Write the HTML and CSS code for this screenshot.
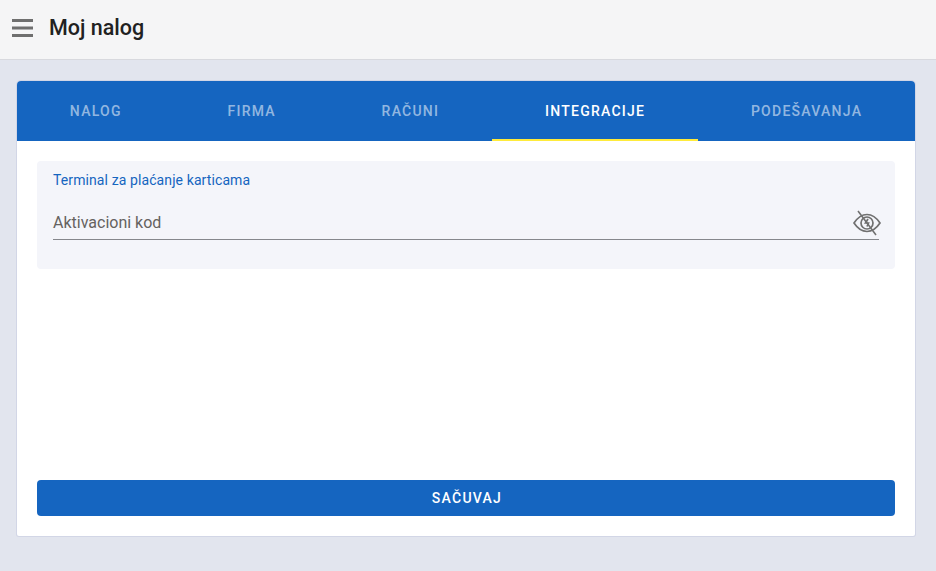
FILE: index.html
```html
<!DOCTYPE html>
<html lang="sr">
<head>
<meta charset="utf-8">
<title>Moj nalog</title>
<link rel="stylesheet" href="styles.css">
</head>
<body>
<header class="topbar">
  <svg class="menu-icon" width="21" height="18" viewBox="0 0 21 18"><path d="M0 0h21v3H0zM0 7.500h21v3H0zM0 15h21v3H0z" fill="#6f6f6f"/></svg>
  <h1 class="title">Moj nalog</h1>
</header>
<main class="page">
  <section class="card">
    <nav class="tabs">
      <a class="tab">NALOG</a>
      <a class="tab">FIRMA</a>
      <a class="tab">RAČUNI</a>
      <a class="tab active">INTEGRACIJE</a>
      <a class="tab">PODEŠAVANJA</a>
    </nav>
    <div class="content">
      <div class="panel">
        <div class="panel-label">Terminal za plaćanje karticama</div>
        <div class="field">
          <span class="placeholder">Aktivacioni kod</span>
          <svg class="eye" width="28" height="26" viewBox="0 0 28 26" fill="none" stroke="#707070">
            <path d="M1 13C5 7 9 4.500 14 4.500S23 7 27 13C23 19 19 21.500 14 21.500S5 19 1 13Z" stroke-width="1.700"/>
            <circle cx="14" cy="13" r="6" stroke-width="1.700"/>
            <path d="M15 9l-2.500 4h3l-1.500 3.500" stroke-width="1.700"/>
            <path d="M5 1l18 24" stroke-width="1.500"/>
          </svg>
        </div>
      </div>
      <button class="save" type="button">SAČUVAJ</button>
    </div>
  </section>
</main>
</body>
</html>
```
FILE: styles.css
```css
* { box-sizing: border-box; }
html, body { margin: 0; height: 100%; }
body {
  background: #e2e5ee;
  font-family: Roboto, "Liberation Sans", sans-serif;
  display: flex;
  flex-direction: column;
  overflow: hidden;
}
.topbar {
  height: 60px;
  flex: none;
  background: #f5f5f6;
  border-bottom: 1px solid #d8d9de;
  display: flex;
  align-items: center;
  padding: 0 0 4px 12px;
  gap: 16px;
}
.menu-icon { flex: none; }
.title {
  margin: 0;
  font-size: 21.5px;
  line-height: 24px;
  font-weight: 500;
  color: #212121;
}
.page { padding: 21px 21px 35px 17px; flex: 1; display: flex; min-height: 0; }
.card {
  flex: 1;
  background: #fff;
  border-radius: 4px 4px 2px 2px;
  box-shadow: 0 0 0 1px rgba(200, 203, 225, .6);
  display: flex;
  flex-direction: column;
}
.tabs {
  height: 60px;
  flex: none;
  background: #1565c0;
  border-radius: 4px 4px 0 0;
  display: flex;
}
.tab {
  flex: 1 1 auto;
  display: flex;
  align-items: center;
  justify-content: center;
  font-size: 14px;
  font-weight: 500;
  letter-spacing: 1.25px;
  color: rgba(255, 255, 255, .55);
}
.tab.active { color: #fff; border-bottom: 2px solid #ffeb3b; padding-top: 2px; }
.content {
  flex: 1;
  display: flex;
  flex-direction: column;
  justify-content: space-between;
  padding: 20px;
}
.panel {
  height: 108px;
  background: #f4f5fa;
  border-radius: 4px;
  padding: 11px 16px 0;
}
.panel-label { font-size: 14px; line-height: 16px; letter-spacing: .1px; color: #1565c0; }
.field {
  margin-top: 18px;
  height: 34px;
  border-bottom: 1px solid #85878c;
  display: flex;
  align-items: center;
  justify-content: space-between;
}
.placeholder { font-size: 16px; color: #65625f; }
.eye { flex: none; align-self: flex-start; margin: 4px -2px 0 0; }
.save {
  height: 36px;
  border: 0;
  border-radius: 4px;
  background: #1565c0;
  color: #fff;
  font-family: inherit;
  font-size: 14px;
  font-weight: 500;
  letter-spacing: 1.25px;
  padding: 0 0 0 2px;
}
```
